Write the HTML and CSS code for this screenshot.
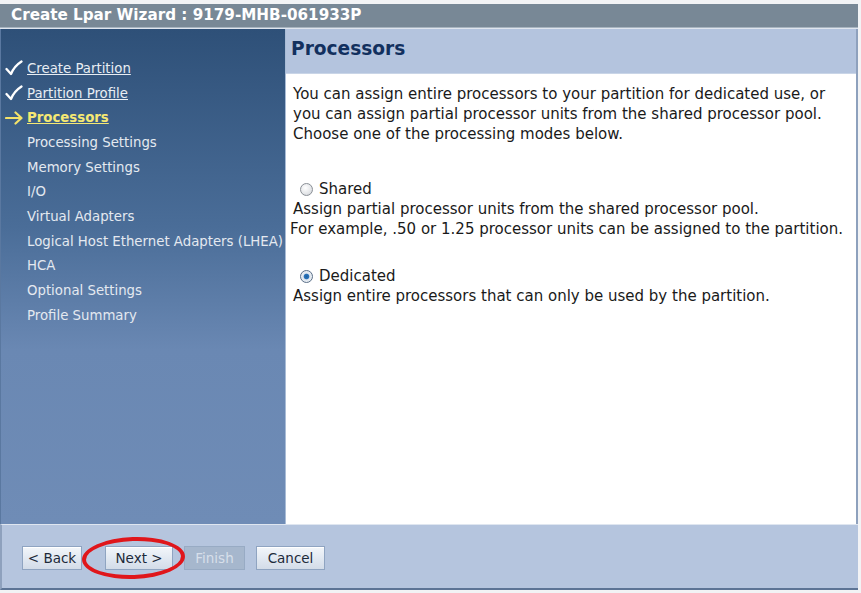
FILE: index.html
```html
<!DOCTYPE html>
<html>
<head>
<meta charset="utf-8">
<link rel="stylesheet" href="styles.css">
</head>
<body>
<div class="window">
  <div class="titlebar">Create Lpar Wizard : 9179-MHB-061933P</div>
  <div class="main">
    <nav class="sidebar">
      <ul class="steps">
        <li class="step done"><span class="mark"><svg width="18" height="16" viewBox="0 0 18 16"><path d="M1.5 9 L6 14 C8 9 11 5 16.5 1.5" fill="none" stroke="#ffffff" stroke-width="2.3" stroke-linecap="round" stroke-linejoin="round"/></svg></span><a href="#">Create Partition</a></li>
        <li class="step done"><span class="mark"><svg width="18" height="16" viewBox="0 0 18 16"><path d="M1.5 9 L6 14 C8 9 11 5 16.5 1.5" fill="none" stroke="#ffffff" stroke-width="2.3" stroke-linecap="round" stroke-linejoin="round"/></svg></span><a href="#">Partition Profile</a></li>
        <li class="step current"><span class="mark"><svg width="18" height="14" viewBox="0 0 18 14"><path d="M1 7 H16 M10.5 1.5 L16.5 7 L10.5 12.5" fill="none" stroke="#f3e26a" stroke-width="2.2" stroke-linecap="round" stroke-linejoin="round"/></svg></span><a href="#">Processors</a></li>
        <li class="step"><span class="mark"></span>Processing Settings</li>
        <li class="step"><span class="mark"></span>Memory Settings</li>
        <li class="step"><span class="mark"></span>I/O</li>
        <li class="step"><span class="mark"></span>Virtual Adapters</li>
        <li class="step"><span class="mark"></span>Logical Host Ethernet Adapters (LHEA)</li>
        <li class="step"><span class="mark"></span>HCA</li>
        <li class="step"><span class="mark"></span>Optional Settings</li>
        <li class="step"><span class="mark"></span>Profile Summary</li>
      </ul>
    </nav>
    <section class="content">
      <h1 class="heading">Processors</h1>
      <div class="body">
        <p class="intro">You can assign entire processors to your partition for dedicated use, or<br>you can assign partial processor units from the shared processor pool.<br>Choose one of the processing modes below.</p>
        <div class="option">
          <label class="radio-label"><span class="radio"></span>Shared</label>
          <p class="desc">Assign partial processor units from the shared processor pool.</p>
          <p class="desc desc-out">For example, .50 or 1.25 processor units can be assigned to the partition.</p>
        </div>
        <div class="option">
          <label class="radio-label"><span class="radio checked"></span>Dedicated</label>
          <p class="desc">Assign entire processors that can only be used by the partition.</p>
        </div>
      </div>
    </section>
  </div>
  <div class="footer">
    <div class="buttons">
      <button class="btn back">&lt; Back</button>
      <button class="btn next">Next &gt;</button>
      <button class="btn finish" disabled>Finish</button>
      <button class="btn cancel">Cancel</button>
      <span class="highlight"></span>
    </div>
  </div>
</div>
</body>
</html>
```

FILE: styles.css
```css
html, body {
  margin: 0;
  padding: 0;
  background: #f2f3f5;
}
body {
  font-family: "DejaVu Sans", Verdana, sans-serif;
  width: 861px;
  height: 593px;
  overflow: hidden;
}
.window {
  width: 858px;
  padding-top: 4px;
  background: #f2f3f5;
}
.titlebar {
  height: 23px;
  line-height: 23px;
  background: #788896;
  color: #ffffff;
  font-weight: bold;
  font-size: 15.2px;
  padding-left: 11px;
  border-bottom: 1px solid #a7b4c0;
  white-space: nowrap;
}
.main {
  display: flex;
  height: 495px;
  border-top: 1px solid #dfe5ee;
}
.sidebar {
  background: linear-gradient(to bottom, #2e5078 0%, #4a6d98 40%, #6a88b3 65%, #6f8cb6 100%);
  border-left: 1px solid #5a78a0;
  border-right: 1px solid #a9bcd6;
  padding-top: 27px;
  box-sizing: border-box;
  width: 286px;
  flex: none;
}
.steps {
  list-style: none;
  margin: 0;
  padding: 0;
}
.step {
  display: flex;
  align-items: center;
  height: 24.7px;
  font-size: 13.3px;
  color: #e4e9f0;
  white-space: nowrap;
}
.mark {
  width: 26px;
  padding-left: 4px;
  box-sizing: border-box;
  display: flex;
  align-items: center;
  flex: none;
}
.step a {
  color: #e8edf3;
  text-decoration: underline;
}
.step.current a {
  color: #f5e873;
  font-weight: bold;
}
.content {
  flex: 1;
  background: #ffffff;
  display: flex;
  flex-direction: column;
  border-right: 2px solid #8ea1bd;
}
.heading {
  margin: 0;
  height: 44px;
  line-height: 40px;
  background: #b4c4de;
  color: #12305e;
  font-size: 18.6px;
  font-weight: bold;
  padding-left: 5px;
  border-bottom: 1px solid #c9d5e7;
}
.body {
  padding: 10px 0 0 7px;
  color: #1a1a1a;
  font-size: 15px;
}
.intro {
  margin: 0;
  line-height: 20px;
}
.option {
  margin-top: 35px;
}
.option + .option {
  margin-top: 27px;
}
.radio-label {
  display: flex;
  align-items: center;
  font-size: 15px;
  height: 20px;
  padding-left: 7px;
}
.radio {
  width: 11px;
  height: 11px;
  border-radius: 50%;
  border: 1px solid #8a8f96;
  background: radial-gradient(circle at 40% 35%, #ffffff 0%, #e3e5e8 60%, #c9ccd1 100%);
  margin-right: 6px;
  display: inline-block;
}
.radio.checked {
  border-color: #5a6f88;
  background: radial-gradient(circle at 50% 50%, #1f5f9e 0%, #2a74bb 30%, #dfe6ee 42%, #f4f6f9 100%);
}
.desc {
  margin: 0;
  line-height: 20px;
}
.desc-out {
  margin-left: -3px;
}
.footer {
  height: 66px;
  background: #b5c5de;
  border-top: 1px solid #dfe6f0;
  border-left: 2px solid #8ea1bd;
  border-bottom: 2px solid #5c7495;
  box-sizing: border-box;
  display: flex;
  align-items: center;
  padding-top: 2px;
}
.buttons {
  position: relative;
  display: flex;
  gap: 11px;
  padding-left: 20px;
}
.btn {
  font-family: "DejaVu Sans", Verdana, sans-serif;
  font-size: 13.5px;
  height: 24px;
  padding: 0;
  white-space: nowrap;
  color: #1d2a3a;
  background: linear-gradient(to bottom, #f3f6fa 0%, #e2e9f2 50%, #d3dce8 100%);
  border: 1px solid #8fa4c1;
  border-radius: 0;
  box-shadow: inset 0 1px 0 #ffffff;
}
.btn.back { width: 60px; }
.btn.next { width: 68px; margin-left: 12px; }
.btn.finish {
  width: 61px;
  color: #d7dfea;
  background: #a6b7cd;
  border-color: #98abc4;
  box-shadow: none;
}
.btn.cancel { width: 69px; }
.highlight {
  position: absolute;
  left: 80px;
  top: -9px;
  width: 95px;
  height: 34px;
  border: 4px solid #e0161b;
  border-radius: 50%;
  transform: rotate(-2deg);
  pointer-events: none;
}
```
